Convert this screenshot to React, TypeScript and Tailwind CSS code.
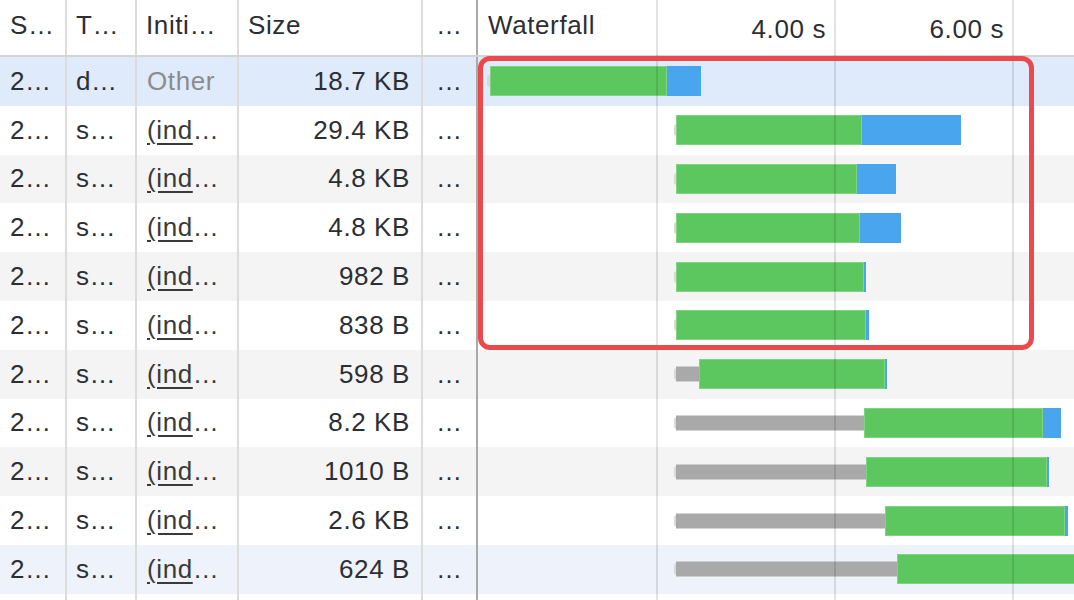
import React from "react";

type Req = {
  status: string;
  type: string;
  initiator: "other" | "link";
  size: string;
  bg: string;
  tick?: number;
  wait?: [number, number];
  green: [number, number];
  blue?: number;
};

// x positions are page pixels; the waterfall column starts at 478
const WF_LEFT = 478;

const ROWS: Req[] = [
  { status: "2…", type: "d…", initiator: "other", size: "18.7 KB", bg: "bg-[#dfeafb]", tick: 487, green: [490, 667], blue: 701 },
  { status: "2…", type: "s…", initiator: "link", size: "29.4 KB", bg: "bg-white", tick: 674, green: [676, 862], blue: 961 },
  { status: "2…", type: "s…", initiator: "link", size: "4.8 KB", bg: "bg-[#f4f4f4]", tick: 674, green: [676, 857], blue: 896 },
  { status: "2…", type: "s…", initiator: "link", size: "4.8 KB", bg: "bg-white", tick: 674, green: [676, 860], blue: 901 },
  { status: "2…", type: "s…", initiator: "link", size: "982 B", bg: "bg-[#f4f4f4]", tick: 674, green: [676, 864], blue: 866 },
  { status: "2…", type: "s…", initiator: "link", size: "838 B", bg: "bg-white", tick: 674, green: [676, 866], blue: 869 },
  { status: "2…", type: "s…", initiator: "link", size: "598 B", bg: "bg-[#f4f4f4]", tick: 674, wait: [676, 699], green: [699, 885], blue: 887 },
  { status: "2…", type: "s…", initiator: "link", size: "8.2 KB", bg: "bg-white", tick: 674, wait: [676, 864], green: [864, 1043], blue: 1061 },
  { status: "2…", type: "s…", initiator: "link", size: "1010 B", bg: "bg-[#f4f4f4]", tick: 674, wait: [676, 866], green: [866, 1047], blue: 1049 },
  { status: "2…", type: "s…", initiator: "link", size: "2.6 KB", bg: "bg-white", tick: 674, wait: [676, 885], green: [885, 1065], blue: 1068 },
  { status: "2…", type: "s…", initiator: "link", size: "624 B", bg: "bg-[#eef2fa]", tick: 674, wait: [676, 897], green: [897, 1110] },
];

const GRID = [656, 834, 1012];

function Bars({ row }: { row: Req }) {
  const x = (v: number) => v - WF_LEFT;
  return (
    <div className="relative h-full flex-1">
      {row.tick !== undefined && (
        <div
          className="absolute top-1/2 h-[12px] -translate-y-1/2 rounded-l-sm bg-[#d9d9d9]"
          style={{ left: x(row.tick), width: 3 }}
        />
      )}
      {row.wait && (
        <div
          className="absolute top-1/2 h-[15px] -translate-y-1/2 bg-[#a9a9a9]"
          style={{ left: x(row.wait[0]), width: row.wait[1] - row.wait[0] }}
        />
      )}
      <div
        className="absolute top-1/2 h-[30px] -translate-y-1/2 border border-[#7fd47f] bg-[#5cc75e]"
        style={{ left: x(row.green[0]), width: row.green[1] - row.green[0] }}
      />
      {row.blue !== undefined && (
        <div
          className="absolute top-1/2 h-[30px] -translate-y-1/2 bg-[#4aa5ef]"
          style={{ left: x(row.green[1]), width: row.blue - row.green[1] }}
        />
      )}
    </div>
  );
}

export default function App() {
  return (
    <div
      className="relative h-[600px] w-[1074px] overflow-hidden bg-white text-[26px] tracking-[0.6px] text-[#2c2e33]"
      style={{ fontFamily: '"Liberation Sans", Arial, sans-serif' }}
    >
      {/* header */}
      <div className="flex h-[57px] border-b-2 border-[#d4d4d4]">
        <div className="flex w-[67px] items-center border-r-2 border-[#dcdcdc] pb-1 pl-[10px]">S…</div>
        <div className="flex w-[70px] items-center border-r-2 border-[#dcdcdc] pb-1 pl-[9px]">T…</div>
        <div className="flex w-[102px] items-center border-r-2 border-[#dcdcdc] pb-1 pl-[9px]">Initi…</div>
        <div className="flex w-[184px] items-center border-r-2 border-[#dcdcdc] pb-1 pl-[9px]">Size</div>
        <div className="flex w-[55px] items-center border-r-2 border-[#a9a9a9] pb-1 pl-[13px]">…</div>
        <div className="relative flex flex-1 items-center pb-1 pl-[10px]">
          Waterfall
          <span className="absolute right-[248px] top-[10px]">4.00 s</span>
          <span className="absolute right-[70px] top-[10px]">6.00 s</span>
        </div>
      </div>

      {/* rows */}
      {ROWS.map((row, i) => (
        <div key={i} className={`flex h-[48.8px] ${row.bg}`}>
          <div className="flex w-[67px] items-center border-r-2 border-[#dcdcdc] pl-[10px]">{row.status}</div>
          <div className="flex w-[70px] items-center border-r-2 border-[#dcdcdc] pl-[9px]">{row.type}</div>
          <div className="flex w-[102px] items-center border-r-2 border-[#dcdcdc] pl-[10px]">
            {row.initiator === "other" ? (
              <span className="text-[#8c8c8c]">Other</span>
            ) : (
              <span className="text-[#3a3a3a]">
                <span className="underline decoration-[1.5px] underline-offset-[4px]">(ind</span>…
              </span>
            )}
          </div>
          <div className="flex w-[184px] items-center justify-end border-r-2 border-[#dcdcdc] pr-[11px]">{row.size}</div>
          <div className="flex w-[55px] items-center border-r-2 border-[#a9a9a9] pl-[13px]">…</div>
          <Bars row={row} />
        </div>
      ))}

      {/* column lines below the last row */}
      <div className="flex h-[10px]">
        <div className="w-[67px] border-r-2 border-[#dcdcdc]" />
        <div className="w-[70px] border-r-2 border-[#dcdcdc]" />
        <div className="w-[102px] border-r-2 border-[#dcdcdc]" />
        <div className="w-[184px] border-r-2 border-[#dcdcdc]" />
        <div className="w-[55px] border-r-2 border-[#a9a9a9]" />
      </div>

      {/* timeline grid lines */}
      {GRID.map((g) => (
        <div
          key={g}
          className="pointer-events-none absolute bottom-0 top-0 w-[2px] bg-[rgba(0,0,0,0.11)]"
          style={{ left: g }}
        />
      ))}

      {/* highlight annotation */}
      <div className="pointer-events-none absolute left-[478px] top-[56px] h-[294px] w-[556px] rounded-[12px] border-[5px] border-[#e94a4e]" />
    </div>
  );
}
